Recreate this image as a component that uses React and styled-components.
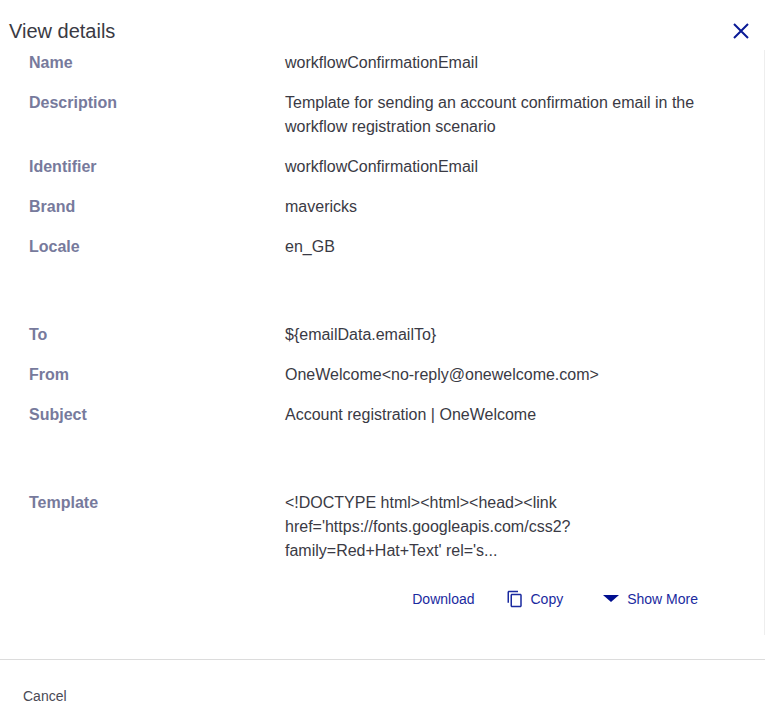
import React from "react";
import styled, { createGlobalStyle } from "styled-components";

const GlobalStyle = createGlobalStyle`
  html, body {
    margin: 0;
    padding: 0;
    background: #fff;
    font-family: "Liberation Sans", Arial, sans-serif;
  }
`;

const Dialog = styled.div`
  width: 765px;
  height: 721px;
  display: flex;
  flex-direction: column;
  overflow: hidden;
  background: #fff;
`;

const Header = styled.header`
  height: 43px;
  flex: none;
  display: flex;
  align-items: center;
  justify-content: space-between;
  padding: 20px 12px 0 9px;
  box-sizing: border-box;
`;

const Title = styled.h2`
  margin: 0;
  font-size: 20px;
  font-weight: 400;
  color: #3a3a44;
`;

const CloseButton = styled.button`
  width: 24px;
  height: 24px;
  margin-bottom: 2px;
  padding: 0;
  border: 0;
  background: none;
  color: #0a1a96;
  display: flex;
`;

const Body = styled.div`
  position: relative;
  flex: 1;
  padding: 0 29px;
`;

const ScrollTrack = styled.div`
  position: absolute;
  top: 7px;
  bottom: 24px;
  right: 0;
  width: 1px;
  background: #eeeeee;
`;

const Group = styled.section`
  margin-bottom: ${(p) => p.$gap || 0}px;
`;

const Row = styled.div`
  display: grid;
  grid-template-columns: 256px 1fr;
  padding: 8px 0;
  font-size: 16px;
  line-height: 24px;
`;

const Label = styled.div`
  font-weight: 700;
  color: #777a9c;
`;

const Value = styled.div`
  color: #3a3a44;
  width: 420px;
`;

const Actions = styled.div`
  display: flex;
  justify-content: flex-end;
  align-items: center;
  height: 24px;
  margin-top: 16px;
  padding-right: 38px;
`;

const Action = styled.a`
  display: flex;
  align-items: center;
  gap: ${(p) => p.$gap || 0}px;
  margin-left: ${(p) => p.$offset || 0}px;
  font-size: 14px;
  color: #1a2aa0;
`;

const Footer = styled.footer`
  height: 62px;
  flex: none;
  border-top: 1px solid #dcdcdc;
  padding: 27px 0 0 23px;
  box-sizing: border-box;
  font-size: 14px;
  line-height: 18px;
  color: #4a4a55;
`;

const App = () => (
  <Dialog>
    <GlobalStyle />
    <Header>
      <Title>View details</Title>
      <CloseButton aria-label="Close">
        <svg width="24" height="24" viewBox="0 0 24 24" fill="none" stroke="currentColor" strokeWidth="2">
          <path d="M5 5l14 14M19 5L5 19" />
        </svg>
      </CloseButton>
    </Header>
    <Body>
      <ScrollTrack />
      <Group $gap={48}>
        <Row><Label>Name</Label><Value>workflowConfirmationEmail</Value></Row>
        <Row>
          <Label>Description</Label>
          <Value>Template for sending an account confirmation email in the workflow registration scenario</Value>
        </Row>
        <Row><Label>Identifier</Label><Value>workflowConfirmationEmail</Value></Row>
        <Row><Label>Brand</Label><Value>mavericks</Value></Row>
        <Row><Label>Locale</Label><Value>en_GB</Value></Row>
      </Group>
      <Group $gap={48}>
        <Row><Label>To</Label><Value>{"${emailData.emailTo}"}</Value></Row>
        <Row><Label>From</Label><Value>{"OneWelcome<no-reply@onewelcome.com>"}</Value></Row>
        <Row><Label>Subject</Label><Value>Account registration | OneWelcome</Value></Row>
      </Group>
      <Group>
        <Row>
          <Label>Template</Label>
          <Value>
            {"<!DOCTYPE html><html><head><link href='https://fonts.googleapis.com/css2?family=Red+Hat+Text' rel='s..."}
          </Value>
        </Row>
        <Actions>
          <Action>Download</Action>
          <Action $offset={31} $gap={7}>
            <svg width="18" height="18" viewBox="0 0 24 24" fill="currentColor">
              <path d="M16 1H4c-1.1 0-2 .9-2 2v14h2V3h12V1zm3 4H8c-1.1 0-2 .9-2 2v14c0 1.1.9 2 2 2h11c1.1 0 2-.9 2-2V7c0-1.1-.9-2-2-2zm0 16H8V7h11v14z" />
            </svg>
            Copy
          </Action>
          <Action $offset={39} $gap={7}>
            <svg width="18" height="18" viewBox="0 0 18 18" fill="#000e8f">
              <path d="M1 5h16L9 12z" />
            </svg>
            Show More
          </Action>
        </Actions>
      </Group>
    </Body>
    <Footer>Cancel</Footer>
  </Dialog>
);

export default App;
